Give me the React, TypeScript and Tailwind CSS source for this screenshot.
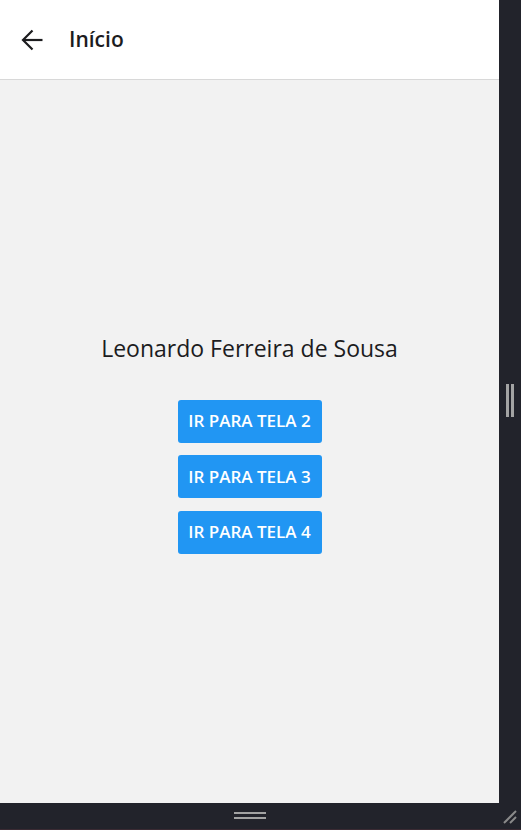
import React from "react";

const font = { fontFamily: '"Open Sans", "Noto Sans", sans-serif' };

function Btn({ label }: { label: string }) {
  return (
    <button className="h-[43px] w-[144px] rounded-[3px] bg-[#2196f3] text-white text-[17px] font-semibold uppercase flex items-center justify-center">
      {label}
    </button>
  );
}

export default function App() {
  return (
    <div className="w-[521px] h-[830px] bg-[#22232b] flex flex-col" style={font}>
      <div className="flex h-[803px]">
        <div className="w-[499px] h-full flex flex-col bg-[#f2f2f2]">
          <div className="h-[80px] bg-white border-b border-[#d8d8d8] flex items-center shrink-0">
            <svg width="30" height="30" viewBox="0 0 30 30" className="ml-[17px] mt-[1px]" fill="none" stroke="#1c1c1e" strokeWidth="2.2">
              <path d="M25.5 15H6" />
              <path d="M15.5 5.5L6 15l9.5 9.5" />
            </svg>
            <span className="ml-[22px] text-[21px] font-semibold text-[#1c1c1e] mt-[1px]">Início</span>
          </div>
          <div className="flex-1 flex flex-col items-center justify-center pt-[3px]">
            <div className="text-[23px] text-[#1c1c1e] leading-[30px]">Leonardo Ferreira de Sousa</div>
            <div className="mt-[37px] flex flex-col gap-[12.5px]">
              <Btn label="Ir para tela 2" />
              <Btn label="Ir para tela 3" />
              <Btn label="Ir para tela 4" />
            </div>
          </div>
        </div>
        <div className="flex-1 flex items-center justify-center gap-[2px] pb-[2px]">
          <div className="w-[3px] h-[33px] bg-[#a3a3a3]" />
          <div className="w-[3px] h-[33px] bg-[#a3a3a3]" />
        </div>
      </div>
      <div className="flex flex-1 border-b border-[#3a2a33]">
        <div className="w-[499px] flex flex-col items-center justify-center gap-[3px] pb-[2px]">
          <div className="w-[32px] h-[2px] bg-[#a3a3a3]" />
          <div className="w-[32px] h-[2px] bg-[#a3a3a3]" />
        </div>
        <div className="flex-1 flex items-end justify-end pr-[3px] pb-[4px]">
          <svg width="16" height="16" viewBox="0 0 16 16" stroke="#8a8a8a" strokeWidth="2">
            <path d="M2 14L14 2" />
            <path d="M8 14L14 8" />
          </svg>
        </div>
      </div>
    </div>
  );
}
